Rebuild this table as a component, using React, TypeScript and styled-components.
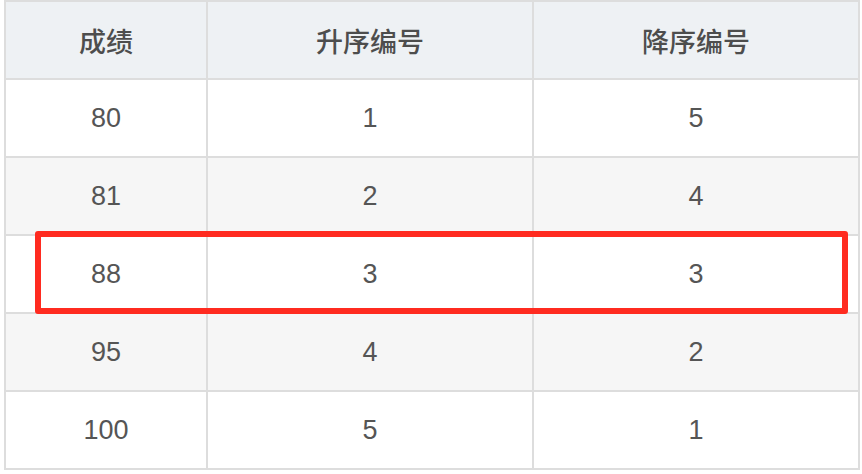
import React from "react";
import styled, { createGlobalStyle } from "styled-components";

const GlobalStyle = createGlobalStyle`
  html, body { margin: 0; padding: 0; background: #ffffff; }
  body { font-family: "Liberation Sans", "Noto Sans CJK SC", Arial, sans-serif; }
`;

const Wrapper = styled.div`
  position: relative;
  width: 856px;
  margin: 0 0 0 4px;
`;

const Table = styled.div`
  display: flex;
  flex-direction: column;
  border-top: 2px solid #dddddd;
  border-left: 2px solid #dddddd;
`;

const Row = styled.div<{ $bg: string }>`
  display: grid;
  grid-template-columns: 202px 326px 326px;
  background: ${(p) => p.$bg};
`;

const Cell = styled.div<{ $head?: boolean }>`
  box-sizing: border-box;
  height: 78px;
  border-right: 2px solid #dddddd;
  border-bottom: 2px solid #dddddd;
  display: flex;
  align-items: center;
  justify-content: center;
  color: ${(p) => (p.$head ? "#4d4d4d" : "#555555")};
  font-family: ${(p) =>
    p.$head
      ? `"Noto Sans CJK SC", "Liberation Sans", sans-serif`
      : `"Liberation Sans", "Noto Sans CJK SC", sans-serif`};
  font-size: ${(p) => (p.$head ? "27px" : "27px")};
  font-weight: ${(p) => (p.$head ? 500 : 400)};
`;

const Highlight = styled.div`
  position: absolute;
  left: 31px;
  top: 231px;
  width: 813px;
  height: 83px;
  box-sizing: border-box;
  border: 6px solid #ff2b20;
  border-radius: 3px;
  pointer-events: none;
`;

const rows: [string, string, string][] = [
  ["80", "1", "5"],
  ["81", "2", "4"],
  ["88", "3", "3"],
  ["95", "4", "2"],
  ["100", "5", "1"],
];

export default function App() {
  return (
    <>
      <GlobalStyle />
      <Wrapper>
        <Table>
          <Row $bg="#eef1f4">
            <Cell $head>成绩</Cell>
            <Cell $head>升序编号</Cell>
            <Cell $head>降序编号</Cell>
          </Row>
          {rows.map((r, i) => (
            <Row key={i} $bg={i % 2 === 1 ? "#f6f6f6" : "#ffffff"}>
              {r.map((v, j) => (
                <Cell key={j}>{v}</Cell>
              ))}
            </Row>
          ))}
        </Table>
        <Highlight />
      </Wrapper>
    </>
  );
}
